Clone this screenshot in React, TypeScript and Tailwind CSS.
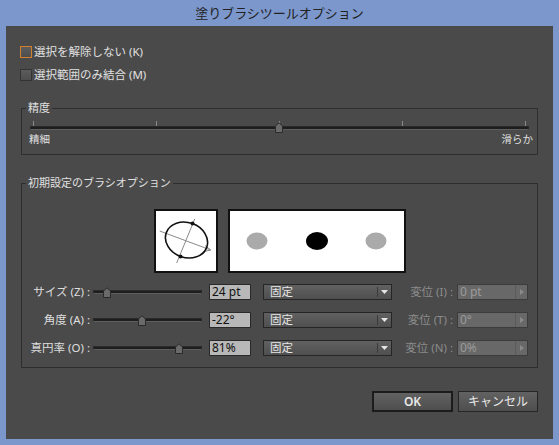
import React from "react";

type RowProps = {
  label: string;
  thumb: number;
  value: string;
  varLabel: string;
  varValue: string;
};

const rows: RowProps[] = [
  { label: "サイズ (Z) :", thumb: 14, value: "24 pt", varLabel: "変位 (I) :", varValue: "0 pt" },
  { label: "角度 (A) :", thumb: 49, value: "-22°", varLabel: "変位 (T) :", varValue: "0°" },
  { label: "真円率 (O) :", thumb: 86, value: "81%", varLabel: "変位 (N) :", varValue: "0%" },
];

function Thumb({ left, top }: { left: number; top: number }) {
  return (
    <svg
      className="absolute"
      style={{ left: left - 4, top }}
      width="8"
      height="11"
      viewBox="0 0 8 11"
    >
      <path d="M0.5 10.5 V4 L4 0.8 L7.5 4 V10.5 Z" fill="#6a6a6a" stroke="#2a2a2a" strokeWidth="1" />
    </svg>
  );
}

function Checkbox({ focused }: { focused?: boolean }) {
  return (
    <span
      className={
        focused
          ? "block h-[12px] w-[12px] border border-[#d0802c] bg-gradient-to-b from-[#5c5c5c] to-[#4e4e4e]"
          : "block h-[12px] w-[12px] border border-[#333333] bg-gradient-to-b from-[#5c5c5c] to-[#4e4e4e]"
      }
    />
  );
}

function Row({ label, thumb, value, varLabel, varValue }: RowProps) {
  return (
    <div className="flex h-[16px] items-center">
      <div className="w-[68px] text-right text-[11.5px] leading-[16px] text-[#dedede]">{label}</div>
      <div className="relative ml-[3px] h-[16px] w-[109px]">
        <div className="absolute left-0 right-0 top-[6px] h-[4px] border border-[#2a2a2a] border-b-[#5e5e5e] bg-[#1e1e1e]" />
        <Thumb left={thumb} top={3} />
      </div>
      <div className="ml-[7px] h-[16px] w-[42px] border border-[#2a2a2a] bg-[#b8b8b8] pl-[2px] text-[12px] leading-[14px] text-[#111111]">
        {value}
      </div>
      <div className="ml-[12px] flex h-[16px] w-[129px] items-center border border-[#262626] bg-gradient-to-b from-[#616161] to-[#4f4f4f]">
        <span className="flex-1 pl-[6px] text-[11.5px] leading-[14px] text-[#e6e6e6]">固定</span>
        <span className="flex h-[10px] w-[14px] items-center justify-center border-l border-[#3a3a3a]">
          <svg width="7" height="4" viewBox="0 0 7 4">
            <path d="M0 0 H7 L3.5 4 Z" fill="#e6e6e6" />
          </svg>
        </span>
      </div>
      <div className="ml-[11px] w-[50px] text-right text-[11.5px] leading-[16px] text-[#8c8c8c]">{varLabel}</div>
      <div className="ml-[4px] flex h-[16px] w-[71px] items-center border border-[#3c3c3c] bg-[#686868]">
        <span className="flex-1 pl-[2px] text-[12px] leading-[14px] text-[#9a9a9a]">{varValue}</span>
        <span className="flex h-[14px] w-[12px] items-center justify-center border-l border-[#5a5a5a]">
          <svg width="4" height="6" viewBox="0 0 4 6">
            <path d="M0 0 L4 3 L0 6 Z" fill="#8a8a8a" />
          </svg>
        </span>
      </div>
    </div>
  );
}

export default function App() {
  const ticks = [3, 126, 249, 372, 495];
  return (
    <div className="flex h-[445px] w-[559px] flex-col bg-[#7b97cc] font-['Noto_Sans','Noto_Sans_CJK_JP',sans-serif]">
      <div className="flex h-[26px] items-center justify-center text-[13px] leading-[16px] text-[#222222]">
        塗りブラシツールオプション
      </div>
      <div className="mx-[6px] mb-[6px] flex flex-1 flex-col bg-[#4a4a4a] pl-[14px] pr-[15px] pt-[18px]">
        <div className="flex flex-col gap-[7px]">
          <label className="flex h-[16px] items-center">
            <Checkbox focused />
            <span className="ml-[2px] text-[11.5px] leading-[16px] text-[#e0e0e0]">選択を解除しない (K)</span>
          </label>
          <label className="flex h-[16px] items-center">
            <Checkbox />
            <span className="ml-[2px] text-[11.5px] leading-[16px] text-[#e0e0e0]">選択範囲のみ結合 (M)</span>
          </label>
        </div>

        <div className="relative ml-[1px] mt-[25px] h-[47px] w-[517px] border border-[#2e2e2e] px-[8px] pt-[12px]">
          <span className="absolute left-[4px] top-[-8px] bg-[#4a4a4a] px-[2px] text-[11px] leading-[14px] text-[#e0e0e0]">
            精度
          </span>
          <div className="relative h-[12px]">
            {ticks.map((t) => (
              <div key={t} className="absolute top-0 h-[5px] w-px bg-[#8a8a8a]" style={{ left: t }} />
            ))}
            <div className="absolute left-0 right-0 top-[5px] h-[4px] border border-[#2a2a2a] border-b-[#5e5e5e] bg-[#1e1e1e]" />
            <Thumb left={249} top={1} />
          </div>
          <div className="flex h-[12px] items-center justify-between text-[10.5px] leading-[12px] text-[#e0e0e0]">
            <span className="-ml-px">精細</span>
            <span className="mr-[-4px]">滑らか</span>
          </div>
        </div>

        <div className="relative ml-[1px] mt-[28px] h-[185px] w-[517px] border border-[#2e2e2e] pt-[25px]">
          <span className="absolute left-[4px] top-[-8px] bg-[#4a4a4a] px-[2px] text-[11px] leading-[14px] text-[#e0e0e0]">
            初期設定のブラシオプション
          </span>
          <div className="flex justify-center gap-[10px]">
            <div className="h-[64px] w-[64px] border-2 border-[#111111] bg-white">
              <svg width="60" height="60" viewBox="2 2 60 60">
                <line x1="5.7" y1="22" x2="56.7" y2="41" stroke="#8a8a8a" strokeWidth="1" />
                <path d="M51 36.5 L56.7 41 L50 42.5" fill="none" stroke="#8a8a8a" strokeWidth="1" />
                <line x1="40.7" y1="10" x2="22.7" y2="54" stroke="#8a8a8a" strokeWidth="1" />
                <ellipse cx="32.5" cy="31" rx="21.5" ry="17.5" transform="rotate(20 32.5 31)" fill="none" stroke="#111111" strokeWidth="1.6" />
                <circle cx="38.5" cy="14.6" r="2" fill="#111111" />
                <circle cx="26.5" cy="47.4" r="2" fill="#111111" />
              </svg>
            </div>
            <div className="h-[64px] w-[178px] border-2 border-[#111111] bg-white">
              <svg width="174" height="60" viewBox="2 2 174 60">
                <ellipse cx="29" cy="32" rx="10.5" ry="8.5" fill="#aaaaaa" />
                <ellipse cx="89" cy="32" rx="11" ry="9" fill="#000000" />
                <ellipse cx="148" cy="32" rx="10.5" ry="8.5" fill="#aaaaaa" />
              </svg>
            </div>
          </div>
          <div className="mt-[11px] flex flex-col gap-[12px]">
            {rows.map((r) => (
              <Row key={r.label} {...r} />
            ))}
          </div>
        </div>

        <div className="mt-[23px] flex justify-end gap-[5px]">
          <button className="h-[21px] w-[81px] border-2 border-[#1c1c1c] bg-gradient-to-b from-[#626262] to-[#4e4e4e] text-[12px] leading-[16px] font-semibold text-[#e8e8e8]">
            OK
          </button>
          <button className="h-[21px] w-[80px] border border-[#262626] bg-gradient-to-b from-[#626262] to-[#4e4e4e] text-[12px] leading-[16px] text-[#e8e8e8]">
            キャンセル
          </button>
        </div>
      </div>
    </div>
  );
}
